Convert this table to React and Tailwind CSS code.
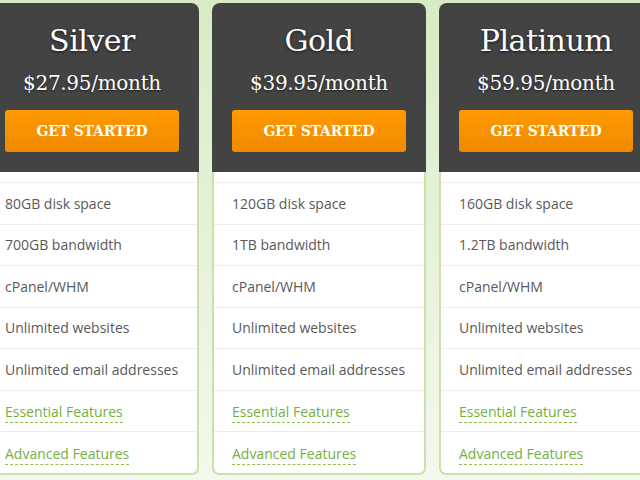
const plans = [
  {
    name: 'Silver',
    price: '$27.95/month',
    features: ['80GB disk space', '700GB bandwidth', 'cPanel/WHM', 'Unlimited websites', 'Unlimited email addresses']
  },
  {
    name: 'Gold',
    price: '$39.95/month',
    features: ['120GB disk space', '1TB bandwidth', 'cPanel/WHM', 'Unlimited websites', 'Unlimited email addresses']
  },
  {
    name: 'Platinum',
    price: '$59.95/month',
    features: ['160GB disk space', '1.2TB bandwidth', 'cPanel/WHM', 'Unlimited websites', 'Unlimited email addresses']
  }
]

const extras = ['Essential Features', 'Advanced Features']

function PlanCard({ plan }) {
  return (
    <div className="w-[214px] shrink-0">
      <div className="h-[169px] rounded-t-[8px] bg-[#434343] px-5 pt-[18px] text-center font-['DejaVu_Serif',serif] text-white">
        <h2 className="text-[30px] leading-[40px] tracking-[-0.5px] [text-shadow:0_1px_3px_rgba(0,0,0,0.7)]">{plan.name}</h2>
        <p className="mt-[8px] text-[20px] leading-[28px] tracking-[-0.3px] [text-shadow:0_1px_2px_rgba(0,0,0,0.6)]">{plan.price}</p>
        <button
          type="button"
          className="mt-[13px] h-[42px] w-full rounded-[3px] bg-gradient-to-b from-[#ff9a00] to-[#ef8a00] text-[14px] font-bold tracking-[-0.2px] text-white"
        >
          GET STARTED
        </button>
      </div>
      <div className="rounded-b-[7px] border-x-2 border-b-2 border-[#c9e2a9] bg-white pt-[10px] font-['Open_Sans',sans-serif] text-[14px]">
        {plan.features.map((f) => (
          <div key={f} className="flex h-[41.5px] items-center border-t border-[#ededed] pl-[18px] text-[#595959]">
            {f}
          </div>
        ))}
        {extras.map((f) => (
          <div key={f} className="flex h-[41.5px] items-center border-t border-[#ededed] pl-[18px] pt-[4px]">
            <span className="border-b border-dashed border-[#8cc152] leading-[20px] text-[#74b03f]">{f}</span>
          </div>
        ))}
      </div>
    </div>
  )
}

export default function App() {
  return (
    <div className="h-[480px] w-[640px] overflow-hidden bg-gradient-to-b from-[#d9ebc4] to-[#f4f8ee]">
      <div className="ml-[-15px] flex gap-[13px] pt-[3px]">
        {plans.map((plan) => (
          <PlanCard key={plan.name} plan={plan} />
        ))}
      </div>
    </div>
  )
}
